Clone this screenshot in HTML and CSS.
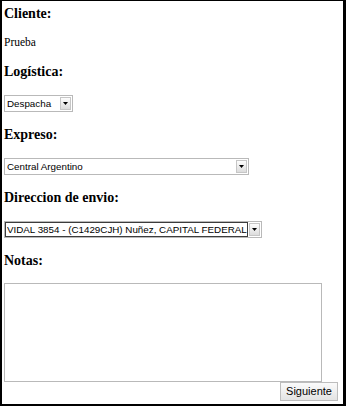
FILE: index.html
```html
<!DOCTYPE html>
<html lang="es">
<head>
<meta charset="utf-8">
<title>Pedido</title>
<link rel="stylesheet" href="styles.css">
</head>
<body>
<form class="page">
  <h3 class="heading heading-first">Cliente:</h3>
  <p class="value">Prueba</p>

  <h3 class="heading">Logística:</h3>
  <div class="combo combo-logistica">
    <select class="combo-select"><option>Despacha</option></select>
    <span class="combo-btn"><svg width="5" height="3" viewBox="0 0 5 3"><path d="M0 0H5L2.5 3Z"/></svg></span>
  </div>

  <h3 class="heading">Expreso:</h3>
  <div class="combo combo-expreso">
    <select class="combo-select"><option>Central Argentino</option></select>
    <span class="combo-btn"><svg width="5" height="3" viewBox="0 0 5 3"><path d="M0 0H5L2.5 3Z"/></svg></span>
  </div>

  <h3 class="heading">Direccion de envio:</h3>
  <div class="combo combo-direccion combo-active">
    <select class="combo-select"><option>VIDAL 3854 - (C1429CJH) Nuñez, CAPITAL FEDERAL</option></select>
    <span class="combo-btn"><svg width="5" height="3" viewBox="0 0 5 3"><path d="M0 0H5L2.5 3Z"/></svg></span>
  </div>

  <h3 class="heading">Notas:</h3>
  <textarea class="notes"></textarea>
  <div class="actions">
    <button type="button" class="btn-next">Siguiente</button>
  </div>
</form>
</body>
</html>
```
FILE: styles.css
```css
html, body {
  margin: 0;
  padding: 0;
  background: #fff;
}

.page {
  box-sizing: border-box;
  width: 346px;
  height: 406px;
  margin: 0;
  border-style: solid;
  border-color: #000;
  border-width: 1px 3px 2px 2px;
  padding: 0 0 0 2px;
  color: #000;
  display: flex;
  flex-direction: column;
  align-items: flex-start;
}

.heading {
  font: bold 14px/16px "Liberation Serif", "Times New Roman", serif;
  margin: 15px 0 0;
}

.heading-first {
  margin-top: 5px;
}

.value {
  font: 11.5px/13px "Liberation Serif", "Times New Roman", serif;
  margin: 14px 0 0;
}

.combo {
  box-sizing: border-box;
  display: flex;
  align-items: center;
  height: 17px;
  margin-top: 15px;
  border: 1px solid #b9b9b9;
  padding: 0 1px 0 0;
  background: #fff;
}

.combo-logistica { width: 69px; }
.combo-expreso { width: 245px; }
.combo-direccion { width: 258px; }

.combo-select {
  -webkit-appearance: none;
  appearance: none;
  flex: 1;
  min-width: 0;
  height: 15px;
  margin: 0;
  border: 0;
  padding: 0 2px;
  background: transparent;
  font: 9.8px/13px "Liberation Sans", Arial, sans-serif;
  color: #000;
  outline: none;
}

.combo-active .combo-select {
  border: 1px solid #3c3c3c;
  padding: 0 0 0 1px;
  margin-right: 1px;
}

.combo-btn {
  box-sizing: border-box;
  flex: none;
  width: 11px;
  height: 13px;
  border: 1px solid #c6c6c6;
  background: linear-gradient(#fdfdfd, #dcdcdc);
  display: flex;
  align-items: center;
  justify-content: center;
}

.combo-btn svg {
  display: block;
  fill: #000;
}

.notes {
  box-sizing: border-box;
  display: block;
  width: 318px;
  height: 99px;
  margin: 14px 0 0;
  border: 1px solid #b9b9b9;
  padding: 2px;
  resize: none;
  font: 10px "Liberation Sans", Arial, sans-serif;
}

.actions {
  align-self: stretch;
  display: flex;
  justify-content: flex-end;
  padding-right: 5px;
}

.btn-next {
  box-sizing: border-box;
  width: 58px;
  height: 19px;
  margin: 0;
  padding: 0;
  border: 1px solid #bdbdbd;
  border-radius: 0;
  background: linear-gradient(#fbfbfb, #e3e3e3);
  font: 11px/17px "Liberation Sans", Arial, sans-serif;
  color: #000;
}
```
